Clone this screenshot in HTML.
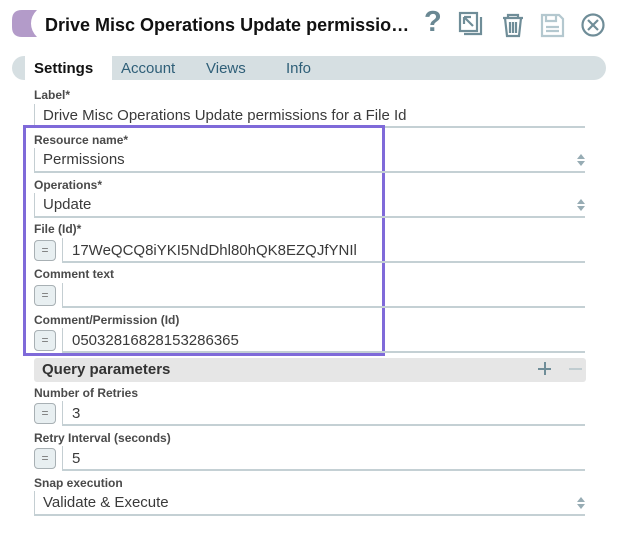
<!DOCTYPE html>
<html><head><style>
*{margin:0;padding:0;box-sizing:border-box}
body{width:618px;height:547px;background:#fff;font-family:"Liberation Sans",sans-serif;position:relative;overflow:hidden}
.a{position:absolute}
.lbl{position:absolute;left:34px;font-size:12px;font-weight:bold;color:#4a4a4a}
.val{position:absolute;font-size:15px;color:#3a3a3a;white-space:nowrap}
.fld{position:absolute;border-left:1px solid #c4ced2;border-bottom:2px solid #c4d0d4;right:33px}
.btn{position:absolute;left:34px;width:22px;height:21px;border:1px solid #a8b0b4;border-radius:4px;background:#e8eff1;color:#777;font-size:12px;text-align:center;line-height:19px}
.arr{position:absolute;left:577px;width:0;height:0;border-left:4px solid transparent;border-right:4px solid transparent}
</style></head><body>
<svg class="a" style="left:12px;top:10px" width="26" height="27" viewBox="0 0 26 27"><path d="M10 0H25Q19 6 19 13.5Q19 21 25 27H10Q0 27 0 17V10Q0 0 10 0z" fill="#b39bc9"/></svg>
<div class="a" style="left:45px;top:15px;width:374px;font-size:18px;font-weight:bold;color:#111;white-space:nowrap;overflow:hidden;text-overflow:ellipsis">Drive Misc Operations Update permissions for a File Id</div>
<div class="a" style="left:424px;top:6px;font-size:29px;font-weight:bold;color:#6a8893">?</div>
<svg class="a" style="left:456px;top:10px" width="150" height="30" viewBox="0 0 150 30">
<g fill="none" stroke="#6f8d98" stroke-width="2.2">
<rect x="4" y="3" width="17" height="18"/><path d="M8 24h17V7"/><path d="M8 7l9 9M8 7v7M8 7h7"/>
<path d="M47 8h20M52 8V5h10v3M49 8l2 18h12l2-18M54 12v11M57 12v11M60 12v11"/>
<path d="M86 5h17l4 4v17H86z M90 5v6h10V5M90 17h13M90 21h13" stroke="#b4c8cf"/>
<circle cx="137" cy="15" r="10.5"/><path d="M132 10l10 10M142 10l-10 10"/>
</g></svg>
<div class="a" style="left:12px;top:56px;width:594px;height:24px;background:#d6dfe2;border-radius:12px"></div>
<div class="a" style="left:25px;top:56px;width:87px;height:24px;background:#fff"></div>
<div class="a" style="left:34px;top:60px;font-size:15px;font-weight:bold;color:#111">Settings</div>
<div class="a" style="left:121px;top:60px;font-size:15px;color:#2f5f78">Account</div>
<div class="a" style="left:206px;top:60px;font-size:15px;color:#2f5f78">Views</div>
<div class="a" style="left:286px;top:60px;font-size:15px;color:#2f5f78">Info</div>

<div class="lbl" style="top:88px">Label*</div>
<div class="fld" style="left:34px;top:104px;height:24px"></div>
<div class="val" style="left:43px;top:107px">Drive Misc Operations Update permissions for a File Id</div>

<div class="a" style="left:23px;top:125px;width:362px;height:231px;border:3px solid #7f6ad9"></div>

<div class="lbl" style="top:133px">Resource name*</div>
<div class="fld" style="left:34px;top:148px;height:25px"></div>
<div class="val" style="left:43px;top:151px">Permissions</div>
<div class="arr" style="top:154px;border-bottom:5px solid #97acb4"></div>
<div class="arr" style="top:161px;border-top:5px solid #97acb4"></div>

<div class="lbl" style="top:178px">Operations*</div>
<div class="fld" style="left:34px;top:193px;height:25px"></div>
<div class="val" style="left:43px;top:196px">Update</div>
<div class="arr" style="top:199px;border-bottom:5px solid #97acb4"></div>
<div class="arr" style="top:206px;border-top:5px solid #97acb4"></div>

<div class="lbl" style="top:222px">File (Id)*</div>
<div class="btn" style="top:240px">=</div>
<div class="fld" style="left:62px;top:238px;height:25px"></div>
<div class="val" style="left:72px;top:242px">17WeQCQ8iYKI5NdDhl80hQK8EZQJfYNIl</div>

<div class="lbl" style="top:267px">Comment text</div>
<div class="btn" style="top:285px">=</div>
<div class="fld" style="left:62px;top:283px;height:25px"></div>

<div class="lbl" style="top:313px">Comment/Permission (Id)</div>
<div class="btn" style="top:330px">=</div>
<div class="fld" style="left:62px;top:328px;height:25px"></div>
<div class="val" style="left:72px;top:332px">05032816828153286365</div>

<div class="a" style="left:34px;top:358px;width:552px;height:24px;background:#e6e6e6;border-radius:3px"></div>
<div class="a" style="left:42px;top:361px;font-size:15px;font-weight:bold;color:#333">Query parameters</div>
<div class="a" style="left:538px;top:368px;width:13px;height:2px;background:#6f8d98"></div>
<div class="a" style="left:544px;top:362px;width:2px;height:13px;background:#6f8d98"></div>
<div class="a" style="left:569px;top:368px;width:13px;height:2px;background:#c0ccd0"></div>

<div class="lbl" style="top:386px">Number of Retries</div>
<div class="btn" style="top:403px">=</div>
<div class="fld" style="left:62px;top:401px;height:25px"></div>
<div class="val" style="left:72px;top:405px">3</div>

<div class="lbl" style="top:431px">Retry Interval (seconds)</div>
<div class="btn" style="top:448px">=</div>
<div class="fld" style="left:62px;top:446px;height:25px"></div>
<div class="val" style="left:72px;top:450px">5</div>

<div class="lbl" style="top:476px">Snap execution</div>
<div class="fld" style="left:34px;top:491px;height:25px"></div>
<div class="val" style="left:43px;top:494px">Validate &amp; Execute</div>
<div class="arr" style="top:497px;border-bottom:5px solid #97acb4"></div>
<div class="arr" style="top:504px;border-top:5px solid #97acb4"></div>
</body></html>
